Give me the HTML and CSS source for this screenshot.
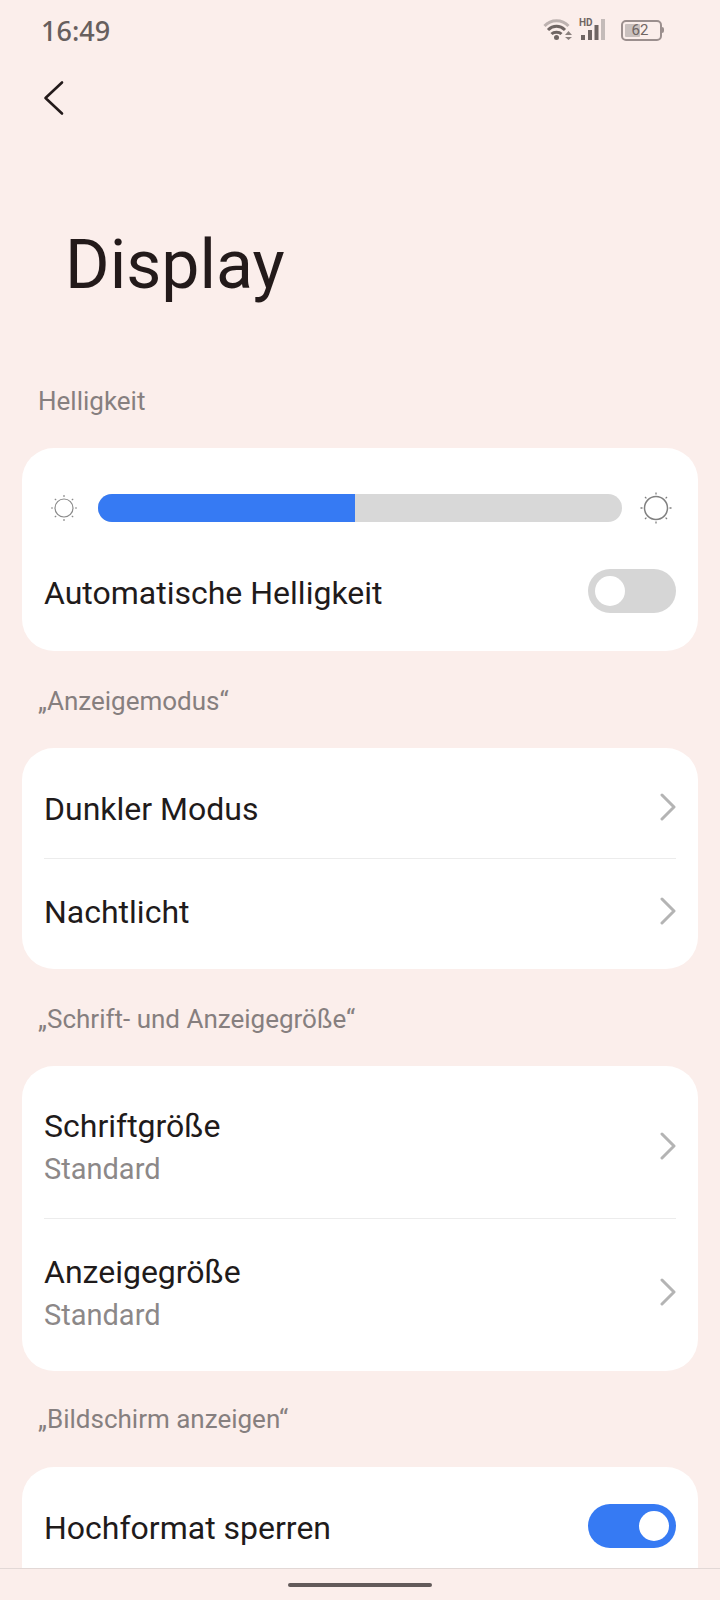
FILE: index.html
```html
<!DOCTYPE html>
<html lang="de">
<head>
  <meta charset="UTF-8">
  <meta name="viewport" content="width=device-width, initial-scale=1.0">
  <title>Display</title>
  <link rel="stylesheet" href="styles.css">
</head>
<body>
  <div class="screen">
    <!-- Statusleiste -->
    <div class="status-bar">
      <span class="clock">16:49</span>
      <div class="status-icons">
        <svg class="wifi" width="30" height="24" viewBox="0 0 30 24">
          <path d="M1.500 8 C8 1 19 1 25.500 8" fill="none" stroke="#bdb2b0" stroke-width="3"/>
          <path d="M5 12 C10 7 17 7 22 12" fill="none" stroke="#6f6563" stroke-width="3"/>
          <path d="M8.500 16 C11 13.500 16 13.500 18.500 16" fill="none" stroke="#6f6563" stroke-width="3"/>
          <circle cx="13.500" cy="19.500" r="2.500" fill="#6f6563"/>
          <path d="M22 17 L25.500 13 L29 17 Z M22 19 L29 19 L25.500 22 Z" fill="#6f6563" opacity="0.8"/>
        </svg>
        <div class="signal">
          <span class="hd">HD</span>
          <svg width="24" height="22" viewBox="0 0 24 22">
            <rect x="0" y="16" width="4" height="5" fill="#6f6563"/>
            <rect x="7" y="11" width="4" height="10" fill="#6f6563"/>
            <rect x="13.500" y="6" width="4" height="15" fill="#6f6563"/>
            <rect x="20" y="0" width="4" height="21" fill="#c4bbb9"/>
          </svg>
        </div>
        <div class="battery">
          <div class="battery-body">
            <div class="battery-level"></div>
            <span class="battery-text">62</span>
          </div>
          <div class="battery-cap"></div>
        </div>
      </div>
    </div>

    <div class="top-bar">
      <svg width="24" height="36" viewBox="0 0 24 36">
        <path d="M20 2.500 L3.500 18 L20 33.500" fill="none" stroke="#231a1a" stroke-width="2.600" stroke-linecap="round" stroke-linejoin="round"/>
      </svg>
    </div>

    <h1 class="page-title">Display</h1>

    <p class="section-label first">Helligkeit</p>
    <div class="card brightness-card">
      <div class="slider-row">
        <svg class="sun small" width="28" height="28" viewBox="0 0 28 28">
          <circle cx="14" cy="14" r="9" fill="none" stroke="#8a8a8a" stroke-width="1.200"/>
          <path d="M14 1v2M14 25v2M1 14h2M25 14h2M4.800 4.800l1.400 1.400M21.800 21.800l1.400 1.400M4.800 23.200l1.400-1.400M21.800 6.200l1.400-1.400" stroke="#8a8a8a" stroke-width="1.200"/>
        </svg>
        <div class="slider">
          <div class="slider-fill"></div>
        </div>
        <svg class="sun large" width="32" height="32" viewBox="0 0 32 32">
          <circle cx="16" cy="16" r="11.500" fill="none" stroke="#808080" stroke-width="1.500"/>
          <path d="M16 0.500v2M16 29.500v2M0.500 16h2M29.500 16h2M5 5l1.400 1.400M25.600 25.600l1.400 1.400M5 27l1.400-1.400M25.600 6.400l1.400-1.400" stroke="#808080" stroke-width="1.300"/>
        </svg>
      </div>
      <div class="toggle-row">
        <span class="item-title">Automatische Helligkeit</span>
        <div class="toggle"><div class="knob"></div></div>
      </div>
    </div>

    <p class="section-label">„Anzeigemodus“</p>
    <div class="card list-card">
      <div class="row">
        <span class="item-title">Dunkler Modus</span>
        <svg class="chevron" width="16" height="28" viewBox="0 0 16 28"><path d="M2 2 L14 14 L2 26" fill="none" stroke="#b4b4b4" stroke-width="3" stroke-linecap="round" stroke-linejoin="round"/></svg>
      </div>
      <div class="row">
        <span class="item-title">Nachtlicht</span>
        <svg class="chevron" width="16" height="28" viewBox="0 0 16 28"><path d="M2 2 L14 14 L2 26" fill="none" stroke="#b4b4b4" stroke-width="3" stroke-linecap="round" stroke-linejoin="round"/></svg>
      </div>
    </div>

    <p class="section-label">„Schrift- und Anzeigegröße“</p>
    <div class="card list-card">
      <div class="row tall">
        <div class="item-text">
          <div class="item-title">Schriftgröße</div>
          <div class="item-sub">Standard</div>
        </div>
        <svg class="chevron" width="16" height="28" viewBox="0 0 16 28"><path d="M2 2 L14 14 L2 26" fill="none" stroke="#b4b4b4" stroke-width="3" stroke-linecap="round" stroke-linejoin="round"/></svg>
      </div>
      <div class="row tall">
        <div class="item-text">
          <div class="item-title">Anzeigegröße</div>
          <div class="item-sub">Standard</div>
        </div>
        <svg class="chevron" width="16" height="28" viewBox="0 0 16 28"><path d="M2 2 L14 14 L2 26" fill="none" stroke="#b4b4b4" stroke-width="3" stroke-linecap="round" stroke-linejoin="round"/></svg>
      </div>
    </div>

    <p class="section-label last-label">„Bildschirm anzeigen“</p>
    <div class="card list-card last-card">
      <div class="row">
        <span class="item-title">Hochformat sperren</span>
        <div class="toggle on"><div class="knob"></div></div>
      </div>
    </div>

    <!-- Navigationsleiste liegt über dem Inhalt -->
    <div class="nav-bar"><div class="nav-handle"></div></div>
  </div>
</body>
</html>
```

FILE: styles.css
```css
html, body {
  margin: 0;
  padding: 0;
}

body {
  background: #fbeeeb;
  font-family: Roboto, "Liberation Sans", sans-serif;
  color: #1f1b1b;
}

.screen {
  position: relative;
  width: 720px;
  height: 1600px;
  overflow: hidden;
}

/* Statusleiste */
.status-bar {
  display: flex;
  justify-content: space-between;
  align-items: center;
  height: 60px;
  padding: 0 56px 0 41px;
}

.clock {
  font-family: "Noto Sans", sans-serif;
  font-size: 27px;
  font-weight: 500;
  color: #675f5e;
}

.status-icons {
  display: flex;
  align-items: center;
}

.wifi {
  margin-right: 8px;
}

.signal {
  position: relative;
  width: 24px;
  height: 22px;
  margin-right: 16px;
}

.signal svg {
  display: block;
}

.hd {
  position: absolute;
  top: -1px;
  left: -2px;
  font-size: 10px;
  line-height: 10px;
  font-weight: 700;
  color: #6f6563;
}

.battery {
  display: flex;
  align-items: center;
}

.battery-body {
  position: relative;
  width: 37px;
  height: 17px;
  border: 2px solid #9b8f8e;
  border-radius: 5px;
}

.battery-level {
  position: absolute;
  top: 2px;
  bottom: 2px;
  left: 2px;
  width: 15px;
  background: #c9c0be;
  border-radius: 1px;
}

.battery-text {
  position: absolute;
  top: 0;
  left: 0;
  width: 34px;
  font-size: 15px;
  line-height: 17px;
  text-align: center;
  color: #6f6563;
}

.battery-cap {
  width: 2px;
  height: 6px;
  background: #9b8f8e;
  border-radius: 0 2px 2px 0;
}

/* Kopf */
.top-bar {
  display: flex;
  align-items: center;
  height: 36px;
  padding: 20px 0 0 42px;
}

.page-title {
  margin: 113px 0 0 65px;
  height: 72px;
  font-size: 68px;
  font-weight: 400;
  line-height: 72px;
  color: #231a1a;
}

.section-label {
  margin: 33px 0 30px;
  padding: 0 38px;
  height: 34px;
  font-size: 26px;
  line-height: 34px;
  color: #867f7f;
}

.section-label.first {
  margin-top: 83px;
  margin-bottom: 30px;
}

.section-label.last-label {
  margin-top: 31px;
  margin-bottom: 31px;
}

.card {
  margin: 0 22px;
  padding: 0 22px;
  background: #fff;
  border-radius: 32px;
}

.brightness-card {
  height: 203px;
  box-sizing: border-box;
  padding-top: 46px;
}

.list-card {
  padding-top: 8px;
  padding-bottom: 7px;
}

/* La última tarjeta sigue por debajo de la barra */
.last-card {
  min-height: 160px;
}

.slider-row {
  display: flex;
  align-items: center;
  justify-content: space-between;
  height: 28px;
  margin: 0 4px 0 7px;
}

.sun.small {
  margin-left: -1px;
  margin-right: 1px;
}

.slider {
  width: 524px;
  height: 28px;
  background: #d8d8d8;
  border-radius: 14px;
  overflow: hidden;
}

.slider-fill {
  width: 257px;
  height: 100%;
  background: #367af3;
}

.toggle-row {
  display: flex;
  align-items: center;
  justify-content: space-between;
  margin-top: 47px;
  height: 44px;
}

.toggle-row .item-title {
  padding-top: 3px;
}

.row {
  display: flex;
  align-items: center;
  justify-content: space-between;
  box-sizing: border-box;
  height: 103px;
  border-bottom: 1px solid #ececec;
}

.row:last-child {
  border-bottom: none;
}

.row.tall {
  height: 145px;
}

.row .item-text,
.row > .item-title {
  padding-top: 3px;
}

.item-title {
  font-size: 32px;
  line-height: 40px;
}

.item-sub {
  margin-top: 3px;
  font-size: 29px;
  line-height: 40px;
  color: #8c8888;
}

.chevron {
  display: block;
}

.toggle {
  display: flex;
  align-items: center;
  box-sizing: border-box;
  width: 88px;
  height: 44px;
  padding: 0 7px;
  background: #d6d6d6;
  border-radius: 22px;
}

.knob {
  width: 30px;
  height: 30px;
  background: #fff;
  border-radius: 50%;
}

.toggle.on {
  justify-content: flex-end;
  margin-bottom: 2px;
  background: #367af3;
}

/* Navigationsleiste */
.nav-bar {
  position: absolute;
  left: 0;
  right: 0;
  bottom: 0;
  display: flex;
  justify-content: center;
  align-items: center;
  height: 31px;
  background: #fbeeeb;
  border-top: 1px solid #e2d8d6;
}

.nav-handle {
  width: 144px;
  height: 4px;
  background: #625a5a;
  border-radius: 2px;
}
```
